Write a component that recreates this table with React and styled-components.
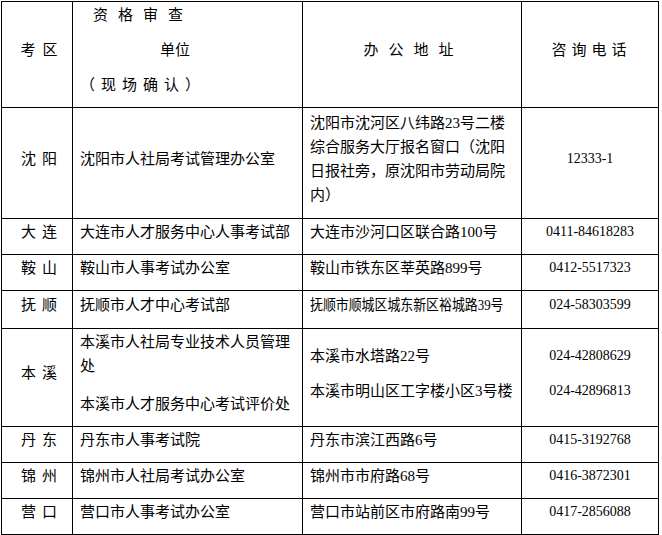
import React from "react";
import styled, { createGlobalStyle } from "styled-components";

const GlobalStyle = createGlobalStyle`
  html, body {
    margin: 0;
    padding: 0;
    background: #ffffff;
  }
  body {
    font-family: "Liberation Serif", "Noto Sans CJK SC", serif;
    color: #000000;
  }
`;

const Page = styled.div`
  padding: 1px 0 0 1px;
`;

const Table = styled.table`
  width: 657px;
  border-collapse: collapse;
  table-layout: fixed;
  font-size: 15px;
  line-height: 24px;
`;

const Col = styled.col`
  width: ${(p) => p.$w}px;
`;

const Row = styled.tr`
  height: ${(p) => p.$h}px;
`;

const Cell = styled.td`
  border: 1px solid #000000;
  padding: 1px 4px 10px 7px;
  vertical-align: middle;
  text-align: ${(p) => (p.$center ? "center" : "left")};
  letter-spacing: ${(p) => p.$spacing || 0}px;
  word-break: break-all;
`;

const RegionCell = styled(Cell)`
  padding-left: ${(p) => 4 + (p.$spacing || 6)}px;
  padding-right: 0;
  text-align: center;
`;

const PhoneCell = styled(Cell)`
  font-family: "Liberation Serif", "Noto Sans CJK SC", serif;
  font-size: 14px;
  text-align: center;
  padding-left: 4px;
`;

const Para = styled.div`
  margin-top: ${(p) => p.$gap || 0}px;
  padding-left: ${(p) => p.$indent || 0}px;
  letter-spacing: ${(p) => p.$spacing || 0}px;
`;

/* text squeezed to fit one line, as the source document does */
const Squeezed = styled.span`
  display: inline-block;
  white-space: nowrap;
  transform: scaleX(${(p) => p.$scale});
  transform-origin: left center;
`;

const rows = [
  {
    h: 111,
    region: "沈阳",
    units: ["沈阳市人社局考试管理办公室"],
    addresses: ["沈阳市沈河区八纬路23号二楼综合服务大厅报名窗口（沈阳日报社旁，原沈阳市劳动局院内）"],
    phones: ["12333-1"],
  },
  {
    h: 36,
    region: "大连",
    units: ["大连市人才服务中心人事考试部"],
    addresses: ["大连市沙河口区联合路100号"],
    phones: ["0411-84618283"],
  },
  {
    h: 36,
    region: "鞍山",
    units: ["鞍山市人事考试办公室"],
    addresses: ["鞍山市铁东区莘英路899号"],
    phones: ["0412-5517323"],
  },
  {
    h: 38,
    region: "抚顺",
    units: ["抚顺市人才中心考试部"],
    addresses: ["抚顺市顺城区城东新区裕城路39号"],
    scale: 0.86,
    phones: ["024-58303599"],
  },
  {
    h: 98,
    region: "本溪",
    units: ["本溪市人社局专业技术人员管理处", "本溪市人才服务中心考试评价处"],
    unitGap: 14,
    addresses: ["本溪市水塔路22号", "本溪市明山区工字楼小区3号楼"],
    phones: ["024-42808629", "024-42896813"],
    gap: 11,
  },
  {
    h: 35,
    region: "丹东",
    units: ["丹东市人事考试院"],
    addresses: ["丹东市滨江西路6号"],
    phones: ["0415-3192768"],
  },
  {
    h: 36,
    region: "锦州",
    units: ["锦州市人社局考试办公室"],
    addresses: ["锦州市市府路68号"],
    phones: ["0416-3872301"],
  },
  {
    h: 36,
    region: "营口",
    units: ["营口市人事考试办公室"],
    addresses: ["营口市站前区市府路南99号"],
    phones: ["0417-2856088"],
  },
];

const App = () => {
  return (
    <Page>
      <GlobalStyle />
      <Table>
        <colgroup>
          <Col $w={71} />
          <Col $w={230} />
          <Col $w={219} />
          <Col $w={137} />
        </colgroup>
        <tbody>
          <Row $h={106}>
            <RegionCell $spacing={7}>考区</RegionCell>
            <Cell>
              <Para $indent={13} $spacing={10}>资格审查</Para>
              <Para $gap={11} $indent={80}>单位</Para>
              <Para $gap={11} $spacing={6}>（现场确认）</Para>
            </Cell>
            <Cell $center $spacing={10}>办公地址</Cell>
            <Cell $center $spacing={5}>咨询电话</Cell>
          </Row>
          {rows.map((r) => (
            <Row key={r.region} $h={r.h}>
              <RegionCell $spacing={6}>{r.region}</RegionCell>
              <Cell>
                {r.units.map((u, i) => (
                  <Para key={u} $gap={i ? r.unitGap : 0}>
                    {u}
                  </Para>
                ))}
              </Cell>
              <Cell>
                {r.addresses.map((a, i) => (
                  <Para key={a} $gap={i ? r.gap : 0}>
                    {r.scale ? <Squeezed $scale={r.scale}>{a}</Squeezed> : a}
                  </Para>
                ))}
              </Cell>
              <PhoneCell>
                {r.phones.map((p, i) => (
                  <Para key={p} $gap={i ? r.gap : 0}>
                    {p}
                  </Para>
                ))}
              </PhoneCell>
            </Row>
          ))}
        </tbody>
      </Table>
    </Page>
  );
};

export default App;
